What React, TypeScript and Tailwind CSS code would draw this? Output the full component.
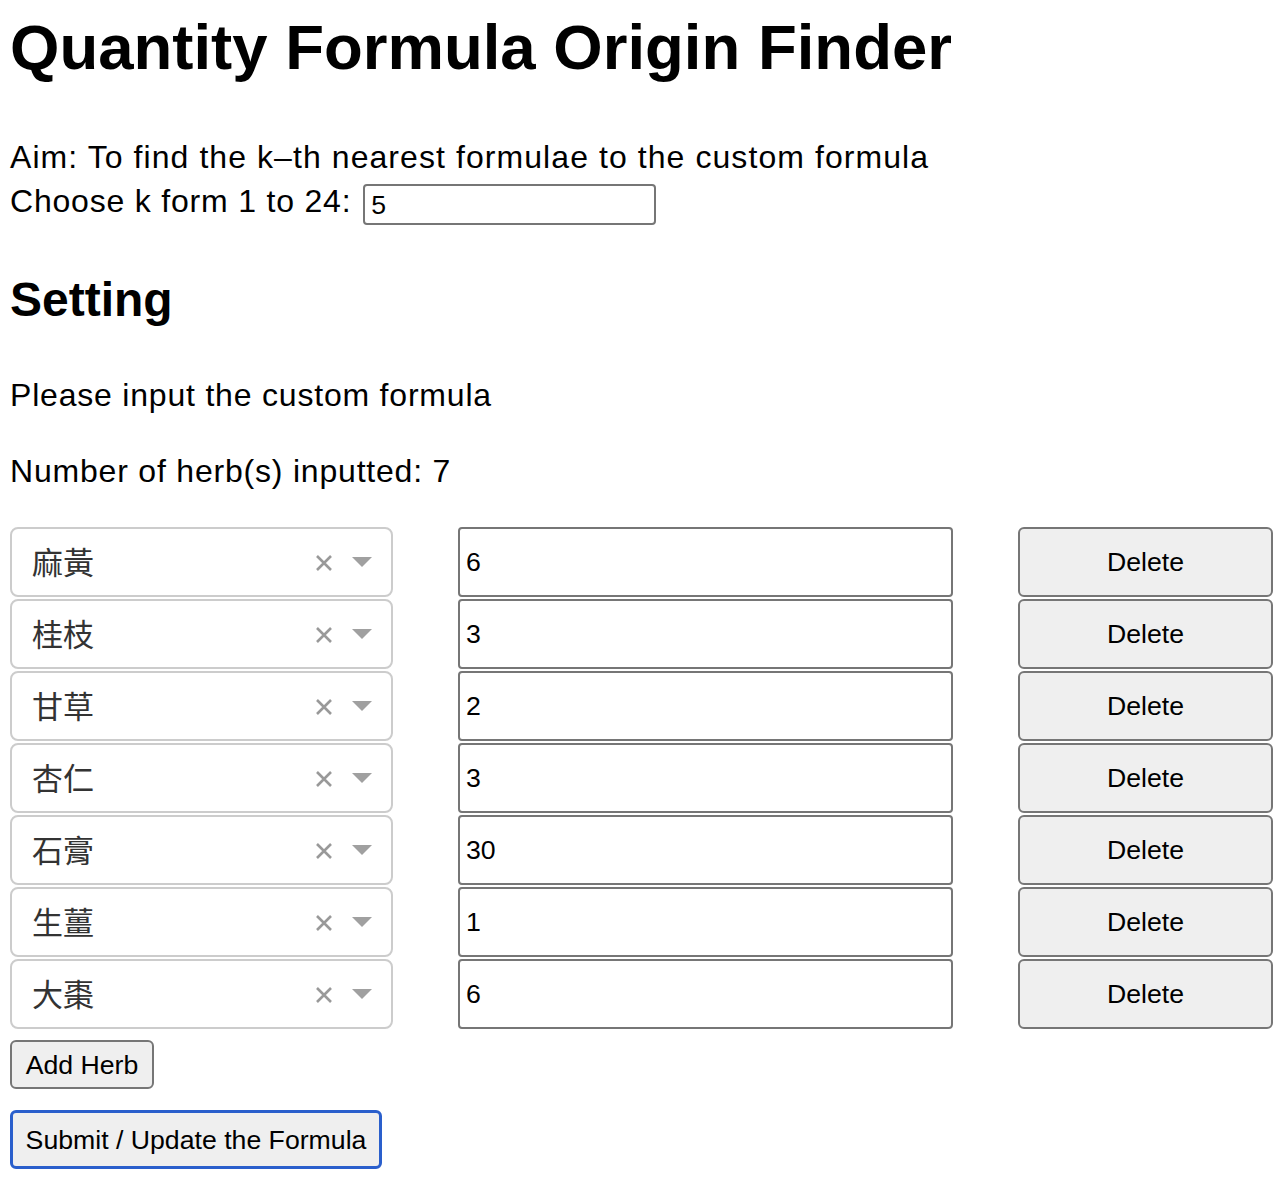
import React from "react";

const herbs: [string, string][] = [
  ["麻黃", "6"],
  ["桂枝", "3"],
  ["甘草", "2"],
  ["杏仁", "3"],
  ["石膏", "30"],
  ["生薑", "1"],
  ["大棗", "6"],
];

const body = "font-['Liberation_Sans','Noto_Sans_CJK_TC',sans-serif]";
const ctrl = "font-['Liberation_Sans',Arial,sans-serif]";

function HerbSelect({ name }: { name: string }) {
  return (
    <div className="flex h-[70px] items-center rounded-[8px] border-2 border-[#cccccc] bg-white pl-[20px] pr-[19px]">
      <span className="flex-1 pb-[4px] font-['Noto_Sans_CJK_TC','Noto_Sans_CJK_SC',sans-serif] text-[31px] leading-none text-[#333333]">
        {name}
      </span>
      <svg width="20" height="20" viewBox="0 0 20 20" className="mr-[18px] mt-[2px]">
        <path d="M3 3 L17 17 M17 3 L3 17" stroke="#999999" strokeWidth="2.6" fill="none" />
      </svg>
      <svg width="20" height="10" viewBox="0 0 20 10">
        <path d="M0 0 L20 0 L10 10 Z" fill="#a0a0a0" />
      </svg>
    </div>
  );
}

export default function App() {
  return (
    <div className={`${body} bg-white pl-[10px] pt-[11px] pb-[13px] text-black`}>
      <h1 className="h-[72px] text-[63.5px] font-bold leading-[72px] tracking-[0px]">
        Quantity Formula Origin Finder
      </h1>
      <div className="mt-[52px] text-[32px] leading-[44px] tracking-[1.07px]">
        Aim: To find the k–th nearest formulae to the custom formula
      </div>
      <div className="flex items-start text-[32px] leading-[44px] tracking-[0.8px]">
        <span>Choose k form 1 to 24:</span>
        <div className={`${ctrl} ml-[12px] mt-[5px] flex h-[41px] w-[293px] items-center rounded-[4px] border-2 border-[#767676] pl-[6px] text-[26.67px] tracking-normal`}>
          5
        </div>
      </div>
      <h2 className="mt-[47px] h-[56px] text-[48px] font-bold leading-[56px]">Setting</h2>
      <div className="mt-[45px] text-[32px] leading-[44px] tracking-[0.8px]">
        Please input the custom formula
      </div>
      <div className="mt-[32px] text-[32px] leading-[44px] tracking-[0.8px]">
        Number of herb(s) inputted: 7
      </div>
      <div className="mt-[34px] grid grid-cols-[383px_495px_255px] gap-x-[65px] gap-y-[2px]">
        {herbs.map(([name, qty], i) => (
          <React.Fragment key={i}>
            <HerbSelect name={name} />
            <div className={`${ctrl} flex h-[70px] items-center rounded-[4px] border-2 border-[#767676] bg-white pl-[6px] text-[26.67px]`}>
              {qty}
            </div>
            <div className={`${ctrl} flex h-[70px] items-center justify-center rounded-[6px] border-2 border-[#767676] bg-[#efefef] text-[26.67px]`}>
              Delete
            </div>
          </React.Fragment>
        ))}
      </div>
      <div className={`${ctrl} mt-[11px] flex h-[49px] w-[144px] items-center justify-center rounded-[6px] border-2 border-[#767676] bg-[#efefef] text-[26.67px]`}>
        Add Herb
      </div>
      <div className={`${ctrl} mt-[21px] flex h-[59px] w-[372px] items-center justify-center rounded-[6px] border-[3px] border-[#2a5fcc] bg-[#efefef] text-[26.67px]`}>
        Submit / Update the Formula
      </div>
    </div>
  );
}
